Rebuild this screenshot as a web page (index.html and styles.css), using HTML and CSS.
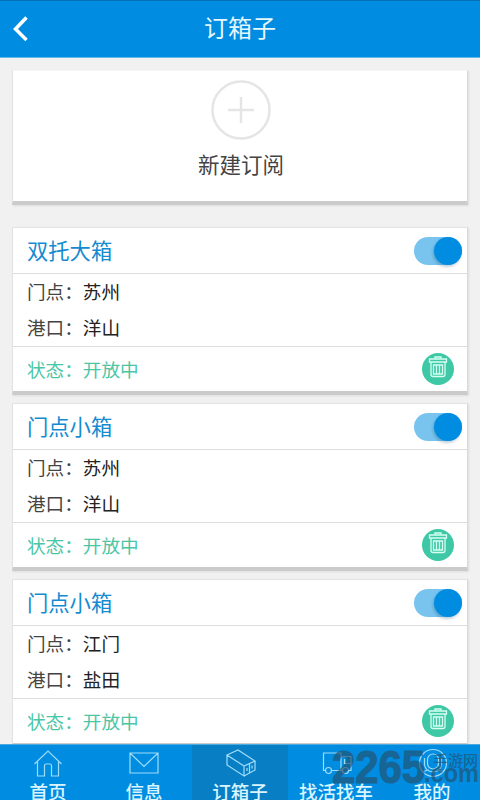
FILE: index.html
```html
<!DOCTYPE html>
<html lang="zh-CN">
<head>
<meta charset="utf-8">
<title>订箱子</title>
<link rel="stylesheet" href="styles.css">
</head>
<body>
<svg class="defs" width="0" height="0">
  <symbol id="trash" viewBox="0 0 32 32">
    <path d="M7.500 6h17v3h-17zM13 6V4h6v2M9 9v12.500q0 2 2 2h10q2 0 2-2V9M11.500 12h9v9h-9zM14.500 12.500v8M17.500 12.500v8"/>
  </symbol>
</svg>
<div class="screen">
  <header class="topbar">
    <svg class="back" viewBox="0 0 16 26"><path d="M13.500 1.500 2.500 13l11 11"/></svg>
    <h1>订箱子</h1>
  </header>
  <main class="content">
    <section class="card create">
      <svg class="plus" viewBox="0 0 60 60"><circle cx="30" cy="30" r="28.500"/><path d="M17 30h26M30 17v26"/></svg>
      <span>新建订阅</span>
    </section>
    <section class="card item">
      <div class="head"><h2>双托大箱</h2><i class="switch"></i></div>
      <div class="info">
        <p><span>门点：</span><b>苏州</b></p>
        <p><span>港口：</span><b>洋山</b></p>
      </div>
      <div class="foot"><span>状态：开放中</span><svg class="trash"><use href="#trash"/></svg></div>
    </section>
    <section class="card item">
      <div class="head"><h2>门点小箱</h2><i class="switch"></i></div>
      <div class="info">
        <p><span>门点：</span><b>苏州</b></p>
        <p><span>港口：</span><b>洋山</b></p>
      </div>
      <div class="foot"><span>状态：开放中</span><svg class="trash"><use href="#trash"/></svg></div>
    </section>
    <section class="card item">
      <div class="head"><h2>门点小箱</h2><i class="switch"></i></div>
      <div class="info">
        <p><span>门点：</span><b>江门</b></p>
        <p><span>港口：</span><b>盐田</b></p>
      </div>
      <div class="foot"><span>状态：开放中</span><svg class="trash"><use href="#trash"/></svg></div>
    </section>
  </main>
  <nav class="tabs">
    <a class="tab"><svg viewBox="0 0 32 30"><path d="M2.500 16 16 3l13.500 13M5.500 14v14h7V17.500q0-1.500 1.500-1.500h4q1.500 0 1.500 1.500V28h7V14"/></svg><span>首页</span></a>
    <a class="tab"><svg viewBox="0 0 32 30"><path d="M2 5h28v20H2zM2 5l14 13.500L30 5"/></svg><span>信息</span></a>
    <a class="tab active"><svg viewBox="0 0 32 30"><path d="M3 7 14 2l17 11-11 5zM3 7v10l17 11V18M20 28l11-6v-9M25.500 16v9M23 20v3M28 17.500v3"/></svg><span>订箱子</span></a>
    <a class="tab"><svg viewBox="0 0 32 30"><path d="M6 22.500H3.500V5H21v17.500h-9.500M21 8.500h10v14h-2.500M22.500 22.500H21M24.500 11v4.500H31"/><circle cx="8.500" cy="22.500" r="3"/><circle cx="25.500" cy="22.500" r="3"/></svg><span>找活找车</span></a>
    <a class="tab"><svg viewBox="0 0 32 30"><circle cx="17" cy="15" r="13.500"/><rect x="11.500" y="6" width="11" height="15" rx="5.500"/><path d="M7 24q3-2 6-2M27 24q-3-2-6-2M8.500 10v7q1 6 8.500 7 7.500-1 8.500-7v-7"/></svg><span>我的</span></a>
  </nav>
  <svg class="mark" width="150" height="44" viewBox="330 746 150 44">
    <text class="num" x="332" y="783" textLength="93" lengthAdjust="spacingAndGlyphs">2265</text>
    <text class="site" x="433" y="766" textLength="45" lengthAdjust="spacingAndGlyphs">手游网</text>
    <text class="com" x="424" y="782" textLength="55" lengthAdjust="spacingAndGlyphs">.com</text>
  </svg>
</div>
</body>
</html>
```
FILE: styles.css
```css
* { box-sizing: border-box; }
body {
  margin: 0;
  font-family: "Noto Sans CJK SC", sans-serif;
  color: #444;
}
h1, h2, p { margin: 0; font-weight: 400; }
.defs { position: absolute; }
.screen {
  position: relative;
  display: flex;
  flex-direction: column;
  width: 480px;
  height: 800px;
  overflow: hidden;
  background: #f1f1f1;
}
svg { fill: none; flex: none; }
.topbar {
  flex: none;
  display: grid;
  grid-template-columns: 40px 1fr 40px;
  align-items: center;
  height: 58px;
  background: #008de1;
  border-top: 1px solid #0571b3;
  border-bottom: 1px solid #65b9e8;
}
.topbar h1 {
  text-align: center;
  color: #e4f7ff;
  font-size: 24px;
  line-height: 52px;
  padding-bottom: 4px;
}
.back { width: 16px; height: 26px; margin: 0 0 1px 13px; stroke: #fff; stroke-width: 3.500; }
.content {
  flex: 1;
  min-height: 0;
  overflow: hidden;
  padding: 12px 12px 0;
}
.card {
  background: #fff;
  border: 1px solid #e2e2e2;
  border-right-color: #d8d8d8;
  border-bottom: 4px solid #cbcbcb;
  box-shadow: 1px 1px 2px #ddd;
}
.create {
  display: flex;
  flex-direction: column;
  align-items: center;
  height: 135px;
  margin-bottom: 22px;
  border-top-color: #f6f6f6;
  padding: 9px 0 0 2px;
}
.create span { font-size: 21.500px; line-height: 30px; margin-top: 9px; }
.plus { width: 60px; height: 60px; stroke: #e5e5e5; stroke-width: 2.500; }
.item { height: 168px; margin-bottom: 8px; }
.head, .foot { display: flex; align-items: center; justify-content: space-between; }
.head { height: 46px; padding: 0 5px 0 14px; border-bottom: 1px solid #ddd; }
.head h2 { color: #148bd0; font-size: 21.300px; line-height: 42px; padding-bottom: 2px; }
.switch {
  display: flex;
  justify-content: flex-end;
  width: 48px;
  height: 28px;
  border-radius: 14px;
  background: #78c4ef;
}
.switch::after {
  content: "";
  width: 28px;
  height: 28px;
  border-radius: 50%;
  background: #008de1;
  box-shadow: -1px 2px 3px rgba(0, 60, 100, .25);
}
.info { height: 73px; padding-left: 14px; border-bottom: 1px solid #ddd; font-size: 18.600px; }
.info p { height: 36px; line-height: 34px; }
.info b { font-weight: 400; color: #222; }
.foot { height: 44px; padding: 0 13px 0 14px; color: #4bc6a4; font-size: 18.600px; }
.foot span { padding-bottom: 1px; }
.trash {
  width: 32px;
  height: 32px;
  border-radius: 50%;
  background: #3fc8a5;
  stroke: #d5fff2;
  stroke-width: 1.300;
}
.tabs {
  flex: none;
  display: grid;
  grid-template-columns: repeat(5, 1fr);
  height: 56px;
  overflow: hidden;
  background: #008de1;
  border-top: 1px solid #4babe0;
}
.tab {
  display: flex;
  flex-direction: column;
  align-items: center;
  padding-top: 3px;
  color: #d9f5ff;
  font-size: 18.500px;
  font-weight: 500;
  line-height: 26px;
}
.tab svg { width: 32px; height: 30px; stroke: #9edcf8; stroke-width: 1.200; }
.active { background: #087fc5; }
.mark { position: absolute; left: 330px; top: 746px; fill: #24506c; opacity: .65; }
.num { font: bold 46px "Liberation Sans", sans-serif; stroke: #24506c; stroke-width: 1.200; stroke-linejoin: round; }
.site { font: 500 15px "Noto Sans CJK SC", sans-serif; }
.com { font: bold 25px "Liberation Sans", sans-serif; }
```
